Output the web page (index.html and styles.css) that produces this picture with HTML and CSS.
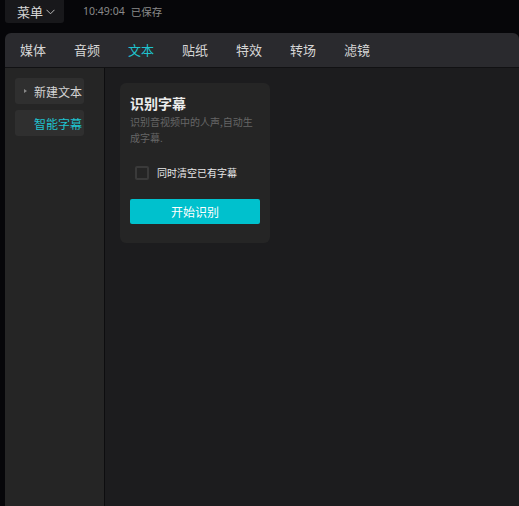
FILE: index.html
```html
<!DOCTYPE html>
<html lang="zh">
<head>
<meta charset="utf-8">
<link rel="stylesheet" href="styles.css">
</head>
<body>
<div class="topbar">
  <div class="menu-btn">菜单<svg class="chev" width="9" height="6" viewBox="0 0 9 6"><path d="M0.5 0.8 L4.5 4.8 L8.5 0.8" fill="none" stroke="#bbb" stroke-width="1"/></svg></div>
  <span class="time">10:49:04</span>
  <span class="saved">已保存</span>
</div>
<div class="panel">
  <div class="tabs">
    <span class="tab">媒体</span>
    <span class="tab">音频</span>
    <span class="tab active">文本</span>
    <span class="tab">贴纸</span>
    <span class="tab">特效</span>
    <span class="tab">转场</span>
    <span class="tab">滤镜</span>
  </div>
  <div class="body">
    <div class="sidebar">
      <div class="side-btn"><span class="tri"></span>新建文本</div>
      <div class="side-btn active">智能字幕</div>
    </div>
    <div class="content">
      <div class="card">
        <div class="card-title">识别字幕</div>
        <div class="card-desc">识别音视频中的人声,自动生成字幕.</div>
        <label class="check-row"><span class="checkbox"></span><span class="check-label">同时清空已有字幕</span></label>
        <div class="start-btn">开始识别</div>
      </div>
    </div>
  </div>
</div>
</body>
</html>
```
FILE: styles.css
```css
html, body {
  margin: 0;
  padding: 0;
  height: 100%;
}
body {
  background: #060609;
  font-family: "Noto Sans CJK SC", "Noto Sans", sans-serif;
  color: #e6e6e6;
  display: flex;
  flex-direction: column;
  overflow: hidden;
}
.topbar {
  height: 33px;
  display: flex;
  align-items: flex-start;
  flex-shrink: 0;
}
.menu-btn {
  margin-left: 5px;
  width: 59px;
  height: 23px;
  background: #18181b;
  border-radius: 0 0 3px 3px;
  box-sizing: border-box;
  padding-left: 12px;
  display: flex;
  align-items: center;
  font-size: 13px;
  color: #d8d8d8;
  line-height: 1;
}
.chev {
  margin-left: 3px;
  margin-top: 1px;
}
.time, .saved {
  font-size: 10.5px;
  color: #8a8a8a;
  line-height: 23px;
}
.time {
  margin-left: 19px;
  font-family: "Noto Sans", "Noto Sans CJK SC", sans-serif;
}
.saved {
  margin-left: 6px;
}
.panel {
  flex: 1;
  margin-left: 5px;
  display: flex;
  flex-direction: column;
  border-radius: 6px 6px 0 0;
  overflow: hidden;
}
.tabs {
  height: 34px;
  background: #2a2a2e;
  border-bottom: 1px solid #111113;
  display: flex;
  align-items: center;
  padding-left: 15px;
  gap: 28px;
  flex-shrink: 0;
}
.tab {
  font-size: 13px;
  color: #d6d6d6;
  line-height: 1;
  width: 26px;
  white-space: nowrap;
  margin-top: -1px;
}
.tab.active {
  color: #1fc3cf;
}
.body {
  flex: 1;
  display: flex;
}
.sidebar {
  width: 99px;
  background: #252525;
  border-right: 1px solid #0d0d0f;
  padding-top: 10px;
  display: flex;
  flex-direction: column;
  align-items: flex-start;
  gap: 6px;
  flex-shrink: 0;
}
.side-btn {
  margin-left: 10px;
  width: 69px;
  height: 26px;
  background: #2f2f2f;
  border-radius: 3px;
  box-sizing: border-box;
  padding-left: 19px;
  font-size: 12px;
  color: #d4d4d4;
  display: flex;
  align-items: center;
  position: relative;
  white-space: nowrap;
}
.side-btn.active {
  color: #1fc3cf;
}
.tri {
  position: absolute;
  left: 9px;
  top: 11px;
  width: 0;
  height: 0;
  border-left: 3px solid #888;
  border-top: 2.5px solid transparent;
  border-bottom: 2.5px solid transparent;
}
.content {
  flex: 1;
  background: #1c1c1e;
  padding: 15px 0 0 15px;
}
.card {
  width: 150px;
  height: 160px;
  box-sizing: border-box;
  background: #252525;
  border-radius: 6px;
  padding: 10px 10px 0 10px;
}
.card-title {
  font-size: 14px;
  font-weight: bold;
  color: #ececec;
  line-height: 20px;
}
.card-desc {
  font-size: 10px;
  color: #666;
  line-height: 16px;
  margin-top: 1px;
}
.check-row {
  display: flex;
  align-items: center;
  margin-top: 20px;
  padding-left: 5px;
}
.checkbox {
  width: 14px;
  height: 14px;
  box-sizing: border-box;
  border: 2px solid #3a3a3a;
  border-radius: 2px;
}
.check-label {
  margin-left: 8px;
  font-size: 10px;
  color: #e8e8e8;
  line-height: 14px;
}
.start-btn {
  margin-top: 19px;
  height: 25px;
  background: #00c1cd;
  border-radius: 2px;
  color: #fff;
  font-size: 12px;
  display: flex;
  align-items: center;
  justify-content: center;
}
```
